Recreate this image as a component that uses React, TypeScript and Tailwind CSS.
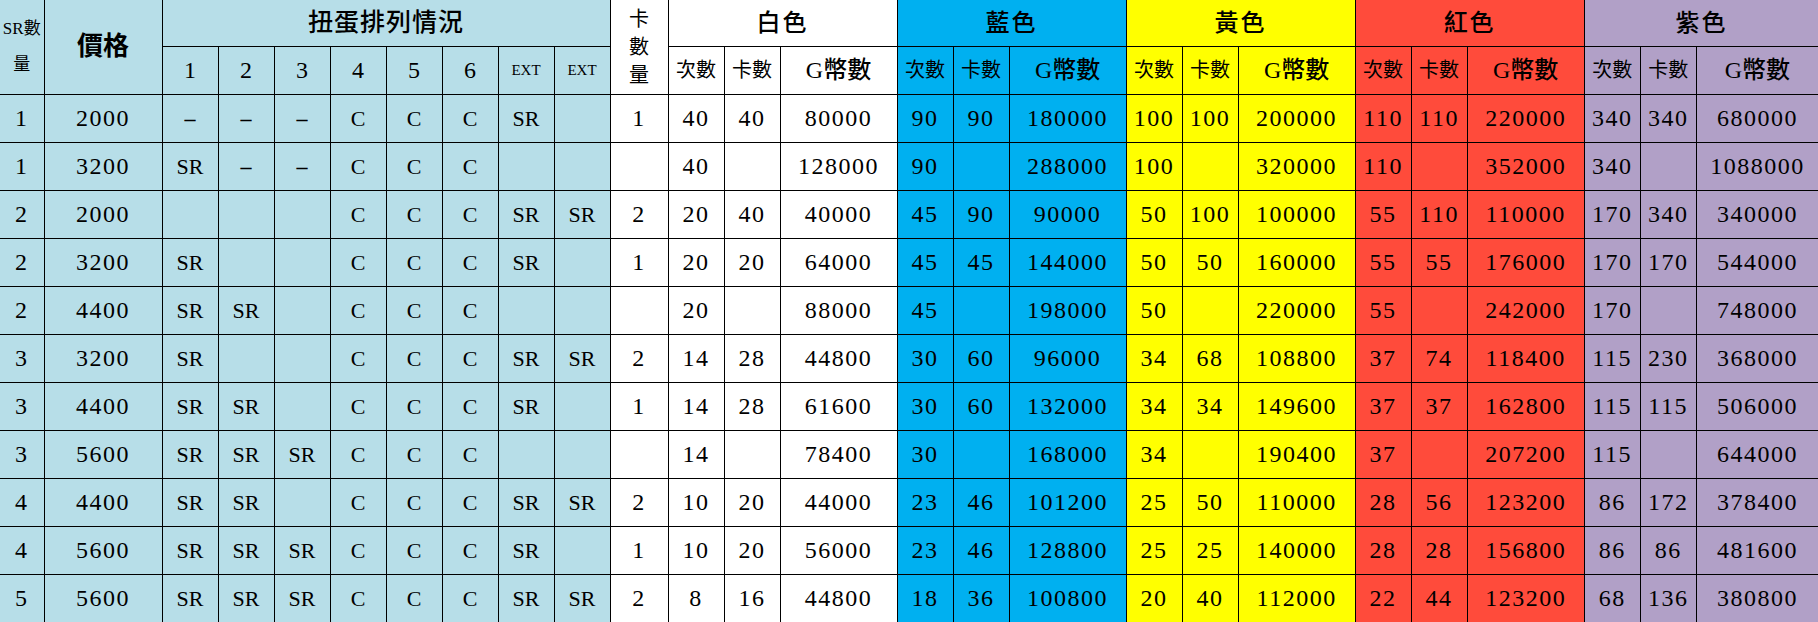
import { Fragment } from "react";

const font = "font-['Liberation_Serif','Noto_Sans_CJK_TC',serif]";

// column widths, left to right
const colW = [
  "w-[44px]", "w-[118px]",
  "w-[56px]", "w-[56px]", "w-[56px]", "w-[56px]", "w-[56px]", "w-[56px]", "w-[56px]", "w-[56px]",
  "w-[58px]",
  "w-[56px]", "w-[56px]", "w-[117px]",
  "w-[56px]", "w-[56px]", "w-[117px]",
  "w-[56px]", "w-[56px]", "w-[117px]",
  "w-[56px]", "w-[56px]", "w-[117px]",
  "w-[56px]", "w-[56px]", "w-[122px]",
];

const LB = "bg-[#b7dee8]";
const groups = [
  { name: "白色", bg: "bg-white" },
  { name: "藍色", bg: "bg-[#00b0f0]" },
  { name: "黃色", bg: "bg-[#ffff00]" },
  { name: "紅色", bg: "bg-[#ff4b3b]" },
  { name: "紫色", bg: "bg-[#b1a0c7]" },
];

function bgFor(i: number) {
  if (i <= 9) return LB;
  if (i === 10) return "bg-white";
  return groups[Math.floor((i - 11) / 3)].bg;
}

// sr, price, slots 1-6, EXT, EXT, card, then 次數/卡數/G幣數 x5
const rows: string[][] = [
  ["1", "2000", "–", "–", "–", "C", "C", "C", "SR", "", "1", "40", "40", "80000", "90", "90", "180000", "100", "100", "200000", "110", "110", "220000", "340", "340", "680000"],
  ["1", "3200", "SR", "–", "–", "C", "C", "C", "", "", "", "40", "", "128000", "90", "", "288000", "100", "", "320000", "110", "", "352000", "340", "", "1088000"],
  ["2", "2000", "", "", "", "C", "C", "C", "SR", "SR", "2", "20", "40", "40000", "45", "90", "90000", "50", "100", "100000", "55", "110", "110000", "170", "340", "340000"],
  ["2", "3200", "SR", "", "", "C", "C", "C", "SR", "", "1", "20", "20", "64000", "45", "45", "144000", "50", "50", "160000", "55", "55", "176000", "170", "170", "544000"],
  ["2", "4400", "SR", "SR", "", "C", "C", "C", "", "", "", "20", "", "88000", "45", "", "198000", "50", "", "220000", "55", "", "242000", "170", "", "748000"],
  ["3", "3200", "SR", "", "", "C", "C", "C", "SR", "SR", "2", "14", "28", "44800", "30", "60", "96000", "34", "68", "108800", "37", "74", "118400", "115", "230", "368000"],
  ["3", "4400", "SR", "SR", "", "C", "C", "C", "SR", "", "1", "14", "28", "61600", "30", "60", "132000", "34", "34", "149600", "37", "37", "162800", "115", "115", "506000"],
  ["3", "5600", "SR", "SR", "SR", "C", "C", "C", "", "", "", "14", "", "78400", "30", "", "168000", "34", "", "190400", "37", "", "207200", "115", "", "644000"],
  ["4", "4400", "SR", "SR", "", "C", "C", "C", "SR", "SR", "2", "10", "20", "44000", "23", "46", "101200", "25", "50", "110000", "28", "56", "123200", "86", "172", "378400"],
  ["4", "5600", "SR", "SR", "SR", "C", "C", "C", "SR", "", "1", "10", "20", "56000", "23", "46", "128800", "25", "25", "140000", "28", "28", "156800", "86", "86", "481600"],
  ["5", "5600", "SR", "SR", "SR", "C", "C", "C", "SR", "SR", "2", "8", "16", "44800", "18", "36", "100800", "20", "40", "112000", "22", "44", "123200", "68", "136", "380800"],
];

const cell = "border border-black text-center align-middle p-0 text-black";

function DataCell({ v, i }: { v: string; i: number }) {
  const isNum = /^\d+$/.test(v);
  const size = isNum ? "text-[24px] tracking-[1.5px]" : v === "–" ? "text-[22px] font-bold" : "text-[22px]";
  const edge = i === 0 ? "border-l-0" : i === 25 ? "border-r-0" : "";
  return <td className={`${cell} ${bgFor(i)} ${size} ${edge} whitespace-nowrap`}>{v}</td>;
}

export default function App() {
  return (
    <div className={`w-[1818px] h-[622px] overflow-hidden bg-white ${font}`}>
      <table className="w-[1818px] table-fixed border-collapse">
        <colgroup>
          {colW.map((w, i) => (
            <col key={i} className={w} />
          ))}
        </colgroup>
        <thead>
          <tr className="h-[46px]">
            <td rowSpan={2} className={`${cell} ${LB} border-t-0 border-l-0 text-[17px] leading-[36px]`}>
              SR數<br />量
            </td>
            <td rowSpan={2} className={`${cell} ${LB} border-t-0 text-[26px] font-bold`}>價格</td>
            <td colSpan={8} className={`${cell} ${LB} border-t-0 text-[25px] font-medium tracking-[1px]`}>扭蛋排列情況</td>
            <td rowSpan={2} className={`${cell} bg-white border-t-0 text-[20px] leading-[28px]`}>
              卡<br />數<br />量
            </td>
            {groups.map((g, gi) => (
              <td
                key={g.name}
                colSpan={3}
                className={`${cell} ${g.bg} border-t-0 text-[24px] font-medium tracking-[2px] ${gi === 4 ? "border-r-0" : ""}`}
              >
                {g.name}
              </td>
            ))}
          </tr>
          <tr className="h-[48px]">
            {["1", "2", "3", "4", "5", "6"].map((n) => (
              <td key={n} className={`${cell} ${LB} text-[24px]`}>{n}</td>
            ))}
            <td className={`${cell} ${LB} text-[15px]`}>EXT</td>
            <td className={`${cell} ${LB} text-[15px]`}>EXT</td>
            {groups.map((g, gi) => (
              <Fragment key={g.name}>
                <td className={`${cell} ${g.bg} text-[20px]`}>次數</td>
                <td className={`${cell} ${g.bg} text-[20px]`}>卡數</td>
                <td className={`${cell} ${g.bg} text-[24px] font-medium ${gi === 4 ? "border-r-0" : ""}`}>G幣數</td>
              </Fragment>
            ))}
          </tr>
        </thead>
        <tbody>
          {rows.map((r, ri) => (
            <tr key={ri} className="h-[48px]">
              {r.map((v, i) => (
                <DataCell key={i} v={v} i={i} />
              ))}
            </tr>
          ))}
        </tbody>
      </table>
    </div>
  );
}
